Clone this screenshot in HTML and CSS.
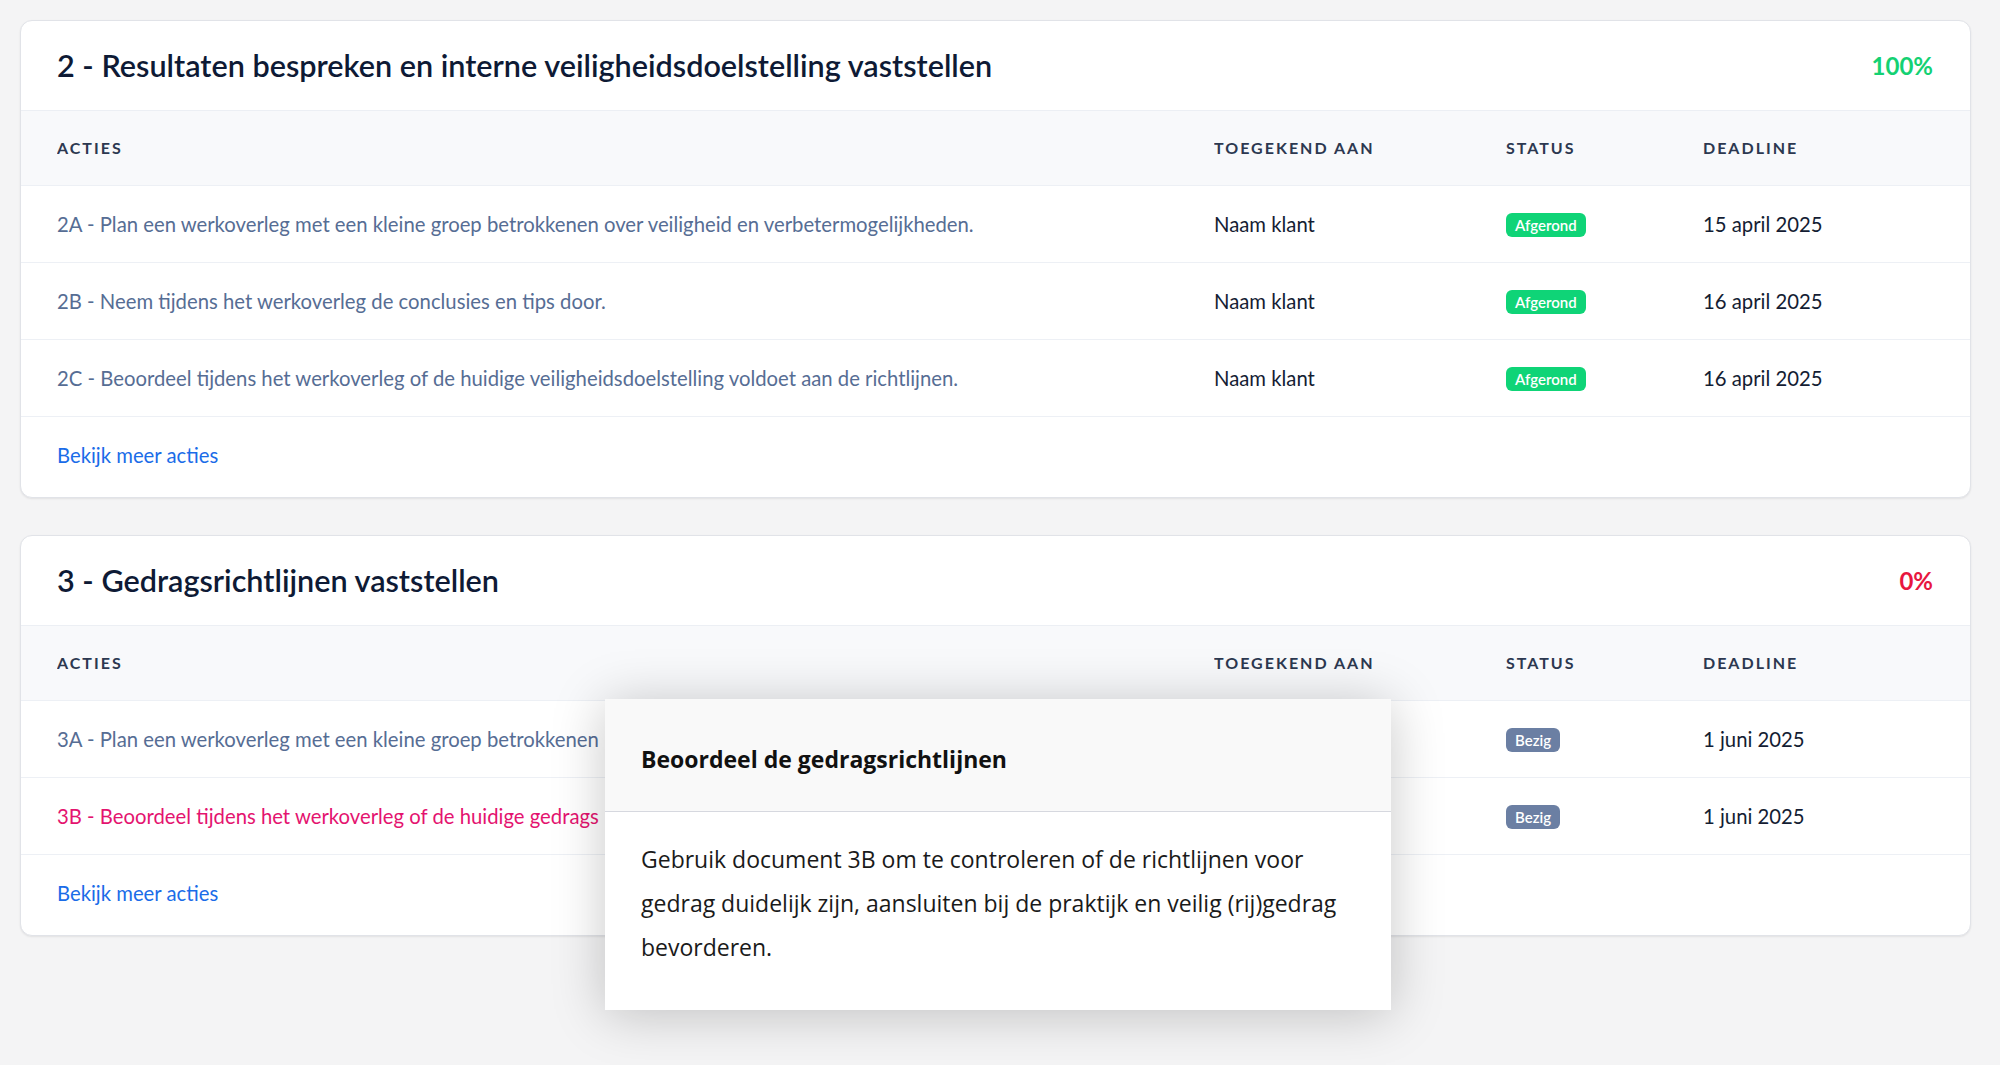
FILE: index.html
```html
<!DOCTYPE html>
<html lang="nl">
<head>
    <meta charset="UTF-8">
    <meta name="viewport" content="width=device-width, initial-scale=1.0">
    <title>Actieplan</title>
    <link rel="stylesheet" href="styles.css">
</head>
<body>

    <div class="page">

        <!-- Stap 2 -->
        <section class="step-card">
            <div class="step-head">
                <h2>2 - Resultaten bespreken en interne veiligheidsdoelstelling vaststellen</h2>
                <span class="progress done">100%</span>
            </div>
            <div class="actions-table">
                <div class="row head-row">
                    <div>Acties</div>
                    <div>Toegekend aan</div>
                    <div>Status</div>
                    <div>Deadline</div>
                </div>
                <div class="row">
                    <div class="action">2A - Plan een werkoverleg met een kleine groep betrokkenen over veiligheid en verbetermogelijkheden.</div>
                    <div>Naam klant</div>
                    <div><span class="badge badge-done">Afgerond</span></div>
                    <div>15 april 2025</div>
                </div>
                <div class="row">
                    <div class="action">2B - Neem tijdens het werkoverleg de conclusies en tips door.</div>
                    <div>Naam klant</div>
                    <div><span class="badge badge-done">Afgerond</span></div>
                    <div>16 april 2025</div>
                </div>
                <div class="row">
                    <div class="action">2C - Beoordeel tijdens het werkoverleg of de huidige veiligheidsdoelstelling voldoet aan de richtlijnen.</div>
                    <div>Naam klant</div>
                    <div><span class="badge badge-done">Afgerond</span></div>
                    <div>16 april 2025</div>
                </div>
            </div>
            <div class="step-foot">
                <a href="#" class="more-link">Bekijk meer acties</a>
            </div>
        </section>

        <!-- Stap 3 -->
        <section class="step-card">
            <div class="step-head">
                <h2>3 - Gedragsrichtlijnen vaststellen</h2>
                <span class="progress open">0%</span>
            </div>
            <div class="actions-table">
                <div class="row head-row">
                    <div>Acties</div>
                    <div>Toegekend aan</div>
                    <div>Status</div>
                    <div>Deadline</div>
                </div>
                <div class="row">
                    <div class="action">3A - Plan een werkoverleg met een kleine groep betrokkenen</div>
                    <div>Naam klant</div>
                    <div><span class="badge badge-busy">Bezig</span></div>
                    <div>1 juni 2025</div>
                </div>
                <div class="row">
                    <div class="action active">3B - Beoordeel tijdens het werkoverleg of de huidige gedrags</div>
                    <div>Naam klant</div>
                    <div><span class="badge badge-busy">Bezig</span></div>
                    <div>1 juni 2025</div>
                </div>
            </div>
            <div class="step-foot">
                <a href="#" class="more-link">Bekijk meer acties</a>
            </div>
        </section>

    </div>

    <!-- Tooltip bij 3B -->
    <div class="tooltip">
        <div class="tooltip-head">Beoordeel de gedragsrichtlijnen</div>
        <div class="tooltip-body">Gebruik document 3B om te controleren of de richtlijnen voor gedrag duidelijk zijn, aansluiten bij de praktijk en veilig (rij)gedrag bevorderen.</div>
    </div>

</body>
</html>
```

FILE: styles.css
```css
/* Algemeen */
body {
    margin: 0;
    background-color: #f4f4f5;
    font-family: 'Lato', 'Noto Sans', sans-serif;
    color: #141d33;
}

.page {
    padding: 20px 29px 40px 20px;
    display: flex;
    flex-direction: column;
    gap: 37px;
}

/* Kaart per stap */
.step-card {
    background: #fff;
    border: 1px solid #e1e3e8;
    border-radius: 12px;
    box-shadow: 0 1px 2px rgba(0, 0, 0, 0.08);
    overflow: hidden;
}

.step-head {
    height: 90px;
    padding: 0 37px 0 36px;
    display: flex;
    align-items: center;
    justify-content: space-between;
    border-bottom: 1px solid #eceff4;
    box-sizing: border-box;
}
.step-head h2 {
    margin: 0;
    font-size: 30.6px;
    font-weight: 600;
    color: #0e1a35;
}
.progress {
    font-size: 24px;
    font-weight: 700;
}
.progress.done { color: #14d173; }
.progress.open { color: #e8173f; }

/* Tabel */
.row {
    display: grid;
    grid-template-columns: 1157px 292px 197px 1fr;
    align-items: center;
    height: 77px;
    padding-left: 36px;
    border-bottom: 1px solid #edf0f5;
    box-sizing: border-box;
    font-size: 20.3px;
    color: #141d33;
}
.row > div {
    white-space: nowrap;
    overflow: hidden;
}
.head-row {
    height: 75px;
    padding-bottom: 2px;
    background-color: #f8f9fb;
    font-size: 16px;
    font-weight: 700;
    letter-spacing: 2px;
    text-transform: uppercase;
    color: #2c3850;
}
.action { color: #566d94; }
.action.active { color: #e4136f; }

.badge {
    display: inline-block;
    padding: 2px 9px;
    border-radius: 6px;
    color: #fff;
    font-size: 15px;
    font-weight: 600;
    line-height: 20px;
    letter-spacing: 0;
}
.badge-done { background-color: #0fd477; }
.badge-busy { background-color: #6b7fa3; }

.step-foot {
    height: 80px;
    padding: 25px 0 0 36px;
    box-sizing: border-box;
}
.more-link {
    font-size: 20.3px;
    line-height: 26px;
    color: #1a6ce8;
    text-decoration: none;
}

/* Tooltip */
.tooltip {
    position: absolute;
    left: 605px;
    top: 699px;
    width: 786px;
    background: #fff;
    box-shadow: 0 4px 50px rgba(0, 0, 0, 0.22);
    font-family: 'Open Sans', sans-serif;
}
.tooltip-head {
    padding: 44px 36px 36px;
    background-color: #f9f9f9;
    border-bottom: 1px solid #d6d8df;
    font-size: 23px;
    font-weight: 700;
    color: #111;
}
.tooltip-body {
    padding: 25px 36px 41px;
    font-size: 23px;
    line-height: 44px;
    color: #1a1a1a;
}
```
